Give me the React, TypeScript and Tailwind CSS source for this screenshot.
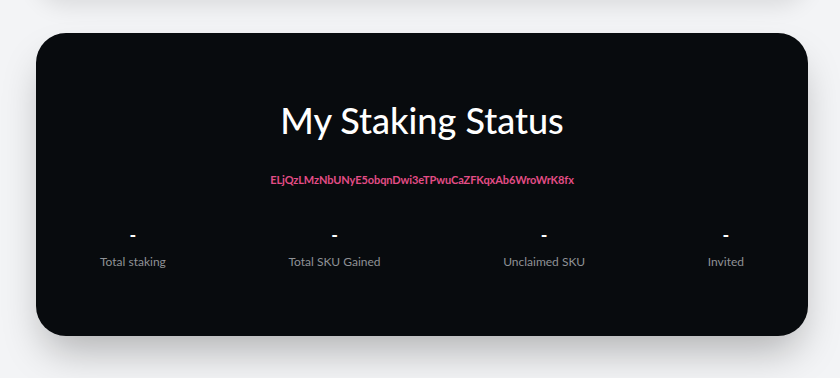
const stats = [
  { value: "-", label: "Total staking" },
  { value: "-", label: "Total SKU Gained" },
  { value: "-", label: "Unclaimed SKU" },
  { value: "-", label: "Invited" },
];

export default function App() {
  return (
    <div className="min-h-[378px] w-[840px] overflow-hidden bg-[#f3f4f6] font-['Lato',sans-serif]">
      <div className="-mt-[64px] ml-[36px] h-[62px] w-[772px] rounded-[30px] bg-[#f3f4f6] shadow-[0_8px_22px_rgba(0,0,0,0.1)]" />
      <section className="ml-[36px] mt-[35px] flex h-[303px] w-[772px] flex-col items-center rounded-[30px] bg-[#080b0e] px-16 pt-[61px] shadow-[0_22px_40px_-8px_rgba(0,0,0,0.28)]">
        <h2 className="text-[36px] font-medium leading-[52px] text-white">My Staking Status</h2>
        <p className="mt-[26px] text-[11px] font-bold leading-4 tracking-[-0.08px] text-[#e34d86]">
          ELjQzLMzNbUNyE5obqnDwi3eTPwuCaZFKqxAb6WroWrK8fx
        </p>
        <div className="mt-[37px] flex w-full justify-between">
          {stats.map((s) => (
            <div key={s.label} className="flex flex-col items-center">
              <div className="text-[18px] font-bold leading-5 text-white">{s.value}</div>
              <div className="mt-[9px] text-[12px] leading-4 text-[#8f9296]">{s.label}</div>
            </div>
          ))}
        </div>
      </section>
    </div>
  );
}
